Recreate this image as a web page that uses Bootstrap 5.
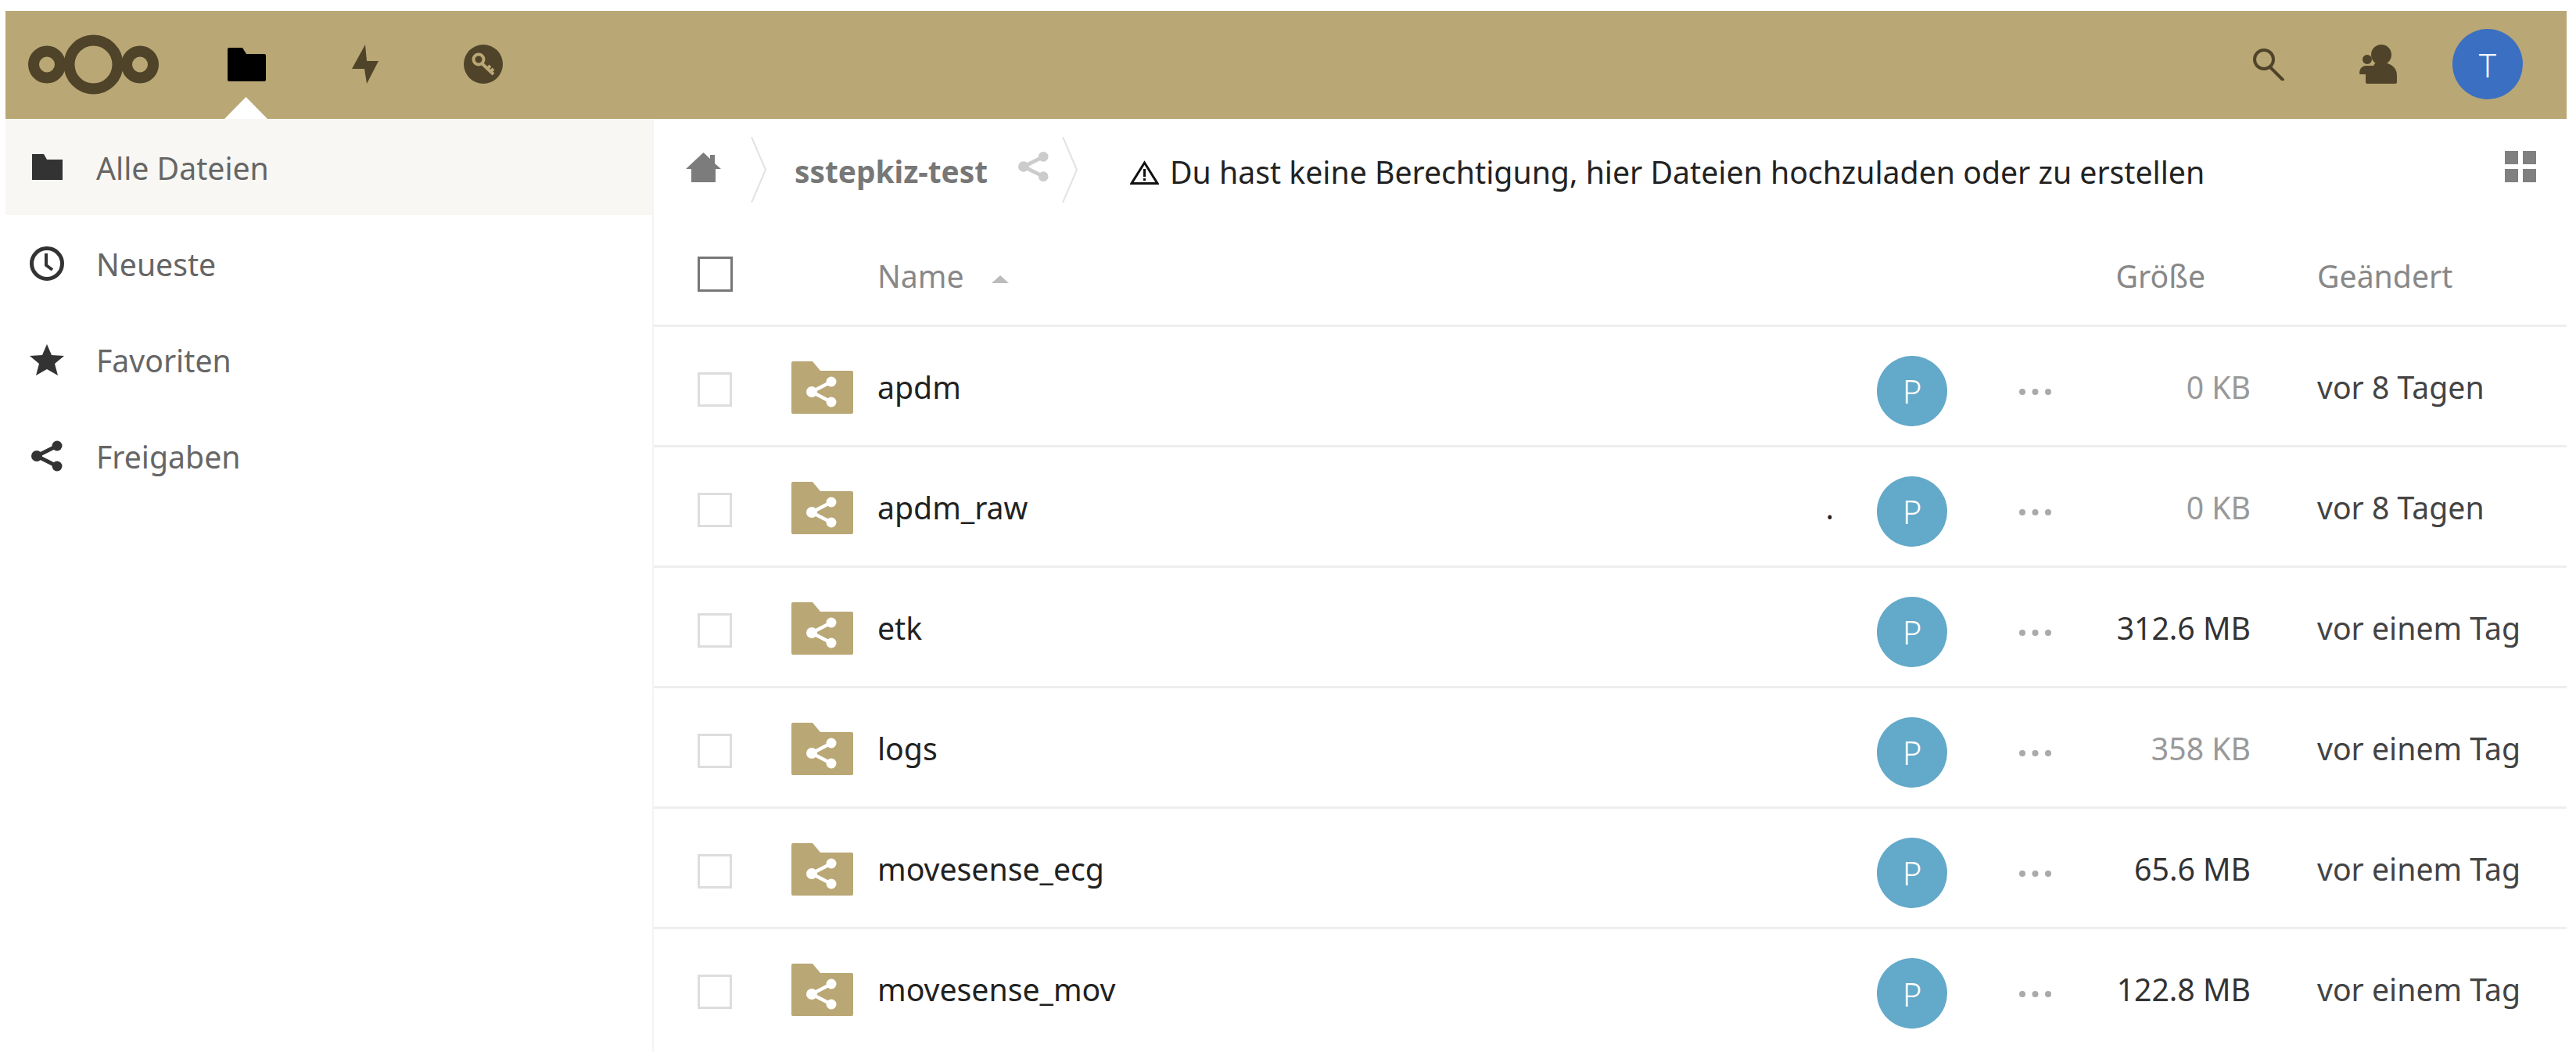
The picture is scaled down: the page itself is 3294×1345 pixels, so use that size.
<!DOCTYPE html>
<html lang="de">
<head>
<meta charset="utf-8">
<title>Dateien</title>
<link href="https://cdn.jsdelivr.net/npm/bootstrap@5.3.0/dist/css/bootstrap.min.css" rel="stylesheet">
<style>
html,body{height:100%;background:#fff}
body{font-family:"Noto Sans","Open Sans",sans-serif;font-size:39.2px;color:#222;overflow:hidden}
.shell{padding:14px 12px 0 7px;height:1345px;overflow:hidden}
.topbar{height:138px;background:#b9a775;padding:0 31px 2px 28px;flex:none}
.brand-logo{width:169px;height:77px;margin-right:36px}
.top-item{width:151px;height:136px;position:relative}
.top-tool{width:140px}
.top-arrow{position:absolute;left:47px;bottom:-2px;width:55px;height:28px}
.me-avatar,.peer-avatar{width:90px;height:90px;color:#fff;font-size:42px;font-weight:300}
.me-avatar{background:#3b6fc1}
.peer-avatar{background:#63a9c9;margin-top:9px}
.work{height:1193px}
.side{width:829px;flex:none;border-right:2px solid #f4f4f4}
.side-item{height:123px;padding:4px 0 0 28px;border:0;border-radius:0;color:#666;background:transparent}
.side-item.is-active{background:#f8f7f3}
.side-ico{width:50px;margin:-4px 38px 0 0;flex:none}
.content{flex:1;min-width:0}
.crumbs{height:130px;padding:0 39px 0 41px}
.crumb-home{margin-top:-6px}
.crumb-sep{width:20px;height:84px;margin:0 36px 0 38px;flex:none}
.crumb-name{font-weight:700;color:#777;width:246px;font-size:38.800px;white-space:nowrap;margin-top:4px}
.crumb-share{margin:-8px 17px 0 40px}
.crumb-sep.second{margin:0 67px 0 0}
.warn-ico{margin:7px 14px 0 0;flex:none}
.notice{color:#222;white-space:nowrap;margin-top:6px}
.view-toggle{margin-top:-8px}
.ftable{table-layout:fixed;width:2446px;margin:0;color:#222}
.ftable>:not(caption)>*>*{padding:0;border-bottom:3px solid #eee;vertical-align:middle;box-shadow:none;background:transparent;font-weight:400}
.ftable thead th{height:134px;color:#888}
.ftable thead th.head-label{padding-top:10px}
.ftable tbody td{height:154px;padding-top:4px}
.ftable tbody tr:last-child td{border-bottom:0}
.col-check{width:176px;padding-left:56px!important}
.col-ico{width:110px}
.col-peer{width:90px}
.col-more{width:133px}
.col-size{width:340px;padding-right:85px!important;text-align:right}
.col-date{width:319px;color:#444}
.ftable thead .col-size{padding-right:143px!important}
.ftable thead .col-date{color:#888}
.pick{display:block;width:44px;height:44px;border:3px solid #ddd;margin-top:5px}
.pick-all{width:45px;height:45px;border-color:#777;margin-top:5px}
.sort-mark{width:22px;height:10px;margin-left:35px;vertical-align:middle}
.size-sm{color:#999}
.size-md{color:#333}
.more-dots{display:block;width:41px;height:8px;margin:11px 0 0 auto}
.folder{display:block;width:79px;height:67px}
.stray{padding-right:55px}
</style>
</head>
<body>
<div class="shell d-flex flex-column">
  <nav class="topbar d-flex align-items-center">
    <svg class="brand-logo" viewBox="0 0 169 77"><g fill="none" stroke="#4f4429"><circle cx="25" cy="38.500" r="17" stroke-width="14"/><circle cx="144" cy="38.500" r="17" stroke-width="14"/><circle cx="84.500" cy="38.500" r="31" stroke-width="14"/></g></svg>
    <div class="top-item d-flex align-items-center justify-content-center">
      <svg width="49" height="43" viewBox="0 0 49 43"><path d="M2 0H19L24 8H47Q49 8 49 10V41Q49 43 47 43H2Q0 43 0 41V2Q0 0 2 0Z" fill="#000"/></svg>
      <svg class="top-arrow" viewBox="0 0 55 28"><path d="M27.500 0L55 28H0Z" fill="#fff"/></svg>
    </div>
    <div class="top-item d-flex align-items-center justify-content-center">
      <svg width="34" height="50" viewBox="0 0 34 50"><path d="M17 0L0 31H16L19 50L34 21H19Z" fill="#4f4429"/></svg>
    </div>
    <div class="top-item d-flex align-items-center justify-content-center">
      <svg width="50" height="50" viewBox="0 0 50 50"><circle cx="25" cy="25" r="25" fill="#4f4429"/><circle cx="19" cy="19" r="6.500" fill="none" stroke="#b9a775" stroke-width="4"/><path d="M23 24L38 38M30 31L34 27M34 35L38 31" fill="none" stroke="#b9a775" stroke-width="4"/></svg>
    </div>
    <div class="top-tool ms-auto d-flex justify-content-center">
      <svg width="41" height="42" viewBox="0 0 41 42"><circle cx="14" cy="15" r="12" fill="none" stroke="#4f4429" stroke-width="4"/><path d="M22 25L38 41" stroke="#4f4429" stroke-width="4" stroke-linecap="round"/></svg>
    </div>
    <div class="top-tool d-flex justify-content-center">
      <svg width="48" height="50" viewBox="0 0 48 50"><ellipse cx="28" cy="13" rx="13" ry="13" fill="#4f4429"/><circle cx="10" cy="19" r="6" fill="#4f4429"/><path d="M0 37Q0 28 8 27H18L20 24H36Q48 28 48 40V48Q48 50 46 50H10Q8 50 8 48V38H1Z" fill="#4f4429"/></svg>
    </div>
    <div class="top-tool d-flex justify-content-center">
      <div class="me-avatar rounded-circle d-flex align-items-center justify-content-center">T</div>
    </div>
  </nav>
  <div class="work d-flex">
    <aside class="side">
      <div class="list-group list-group-flush">
        <a class="list-group-item side-item is-active d-flex align-items-center">
          <span class="side-ico d-flex justify-content-center"><svg width="39" height="33" viewBox="0 0 39 33"><path d="M0 0H15L19 7H39V33H0Z" fill="#333"/></svg></span>Alle Dateien</a>
        <a class="list-group-item side-item d-flex align-items-center">
          <span class="side-ico d-flex justify-content-center"><svg width="46" height="44" viewBox="0 0 46 44"><circle cx="23" cy="22" r="19.500" fill="none" stroke="#333" stroke-width="5"/><path d="M22 9V24L30 30" fill="none" stroke="#333" stroke-width="4"/></svg></span>Neueste</a>
        <a class="list-group-item side-item d-flex align-items-center">
          <span class="side-ico d-flex justify-content-center"><svg width="44" height="40" viewBox="0 0 44 40"><path d="M22 0L28 14L44 15L32 25L36 40L22 32L8 40L12 25L0 15L16 14Z" fill="#333"/></svg></span>Favoriten</a>
        <a class="list-group-item side-item d-flex align-items-center">
          <span class="side-ico d-flex justify-content-center"><svg width="40" height="40" viewBox="0 0 40 40"><g fill="#333"><circle cx="33" cy="7" r="6.500"/><circle cx="33" cy="33" r="6.500"/><circle cx="7" cy="20" r="7"/></g><path d="M33 7L7 20L33 33" fill="none" stroke="#333" stroke-width="5"/></svg></span>Freigaben</a>
      </div>
    </aside>
    <main class="content">
      <div class="crumbs d-flex align-items-center">
        <svg width="45" height="38" viewBox="0 0 45 38" class="crumb-home flex-shrink-0"><path d="M22.500 0L31 8V3H37V14L45 21H38V38H7V21H0Z" fill="#7c7c7c"/></svg>
        <svg class="crumb-sep" viewBox="0 0 20 84"><path d="M1 0L19 42L1 84" fill="none" stroke="#e2e2e2" stroke-width="2"/></svg>
        <span class="crumb-name">sstepkiz-test</span>
        <svg class="crumb-share flex-shrink-0" width="39" height="40" viewBox="0 0 40 40"><g fill="#ccc"><circle cx="33" cy="7" r="6.500"/><circle cx="33" cy="33" r="6.500"/><circle cx="7" cy="20" r="7"/></g><path d="M33 7L7 20L33 33" fill="none" stroke="#ccc" stroke-width="5"/></svg>
        <svg class="crumb-sep second" viewBox="0 0 20 84"><path d="M1 0L19 42L1 84" fill="none" stroke="#e2e2e2" stroke-width="2"/></svg>
        <svg class="warn-ico" width="37" height="31" viewBox="0 0 37 31"><path d="M18.500 3L35 29.500H2Z" fill="none" stroke="#111" stroke-width="3"/><path d="M18.500 11V21M18.500 23V26" stroke="#111" stroke-width="3"/></svg>
        <span class="notice">Du hast keine Berechtigung, hier Dateien hochzuladen oder zu erstellen</span>
        <svg class="view-toggle ms-auto flex-shrink-0" width="40" height="40" viewBox="0 0 40 40"><path d="M0 0H17V17H0ZM23 0H40V17H23ZM0 23H17V40H0ZM23 23H40V40H23Z" fill="#808080"/></svg>
      </div>
      <table class="table ftable">
        <thead>
          <tr>
            <th class="col-check"><span class="pick pick-all"></span></th>
            <th class="col-ico"></th>
            <th class="head-label">Name<svg class="sort-mark" viewBox="0 0 22 10"><path d="M11 0L22 10H0Z" fill="#bbb"/></svg></th>
            <th class="col-peer"></th>
            <th class="col-more"></th>
            <th class="col-size head-label">Größe</th>
            <th class="col-date head-label">Geändert</th>
          </tr>
        </thead>
        <tbody id="rows"></tbody>
      </table>
    </main>
  </div>
</div>
<script>
const data=[["apdm","0 KB","size-sm","vor 8 Tagen"],["apdm_raw","0 KB","size-sm","vor 8 Tagen"],["etk","312.6 MB","size-md","vor einem Tag"],["logs","358 KB","size-sm","vor einem Tag"],["movesense_ecg","65.6 MB","size-md","vor einem Tag"],["movesense_mov","122.8 MB","size-md","vor einem Tag"]];
document.getElementById("rows").innerHTML=data.map(d=>`<tr>
<td class="col-check"><span class="pick"></span></td>
<td><svg class="folder" viewBox="0 0 79 67"><path d="M2 0H27L37 12H77Q79 12 79 14V65Q79 67 77 67H2Q0 67 0 65V2Q0 0 2 0Z" fill="#b9a775"/><g fill="#fff"><circle cx="51" cy="26" r="6.500"/><circle cx="51" cy="52" r="6.500"/><circle cx="26" cy="39" r="7"/></g><path d="M51 26L26 39L51 52" fill="none" stroke="#fff" stroke-width="4.500"/></svg></td>
<td><div class="d-flex justify-content-between"><span>${d[0]}</span>${d[0]==="apdm_raw"?'<span class="stray">.</span>':''}</div></td>
<td><div class="peer-avatar rounded-circle d-flex align-items-center justify-content-center">P</div></td>
<td><svg class="more-dots" viewBox="0 0 41 8"><g fill="#aaa"><circle cx="4" cy="4" r="4"/><circle cx="20.500" cy="4" r="4"/><circle cx="37" cy="4" r="4"/></g></svg></td>
<td class="col-size ${d[2]}">${d[1]}</td>
<td class="col-date">${d[3]}</td></tr>`).join("");
</script>
<script src="https://cdn.jsdelivr.net/npm/bootstrap@5.3.0/dist/js/bootstrap.bundle.min.js"></script>
</body>
</html>
